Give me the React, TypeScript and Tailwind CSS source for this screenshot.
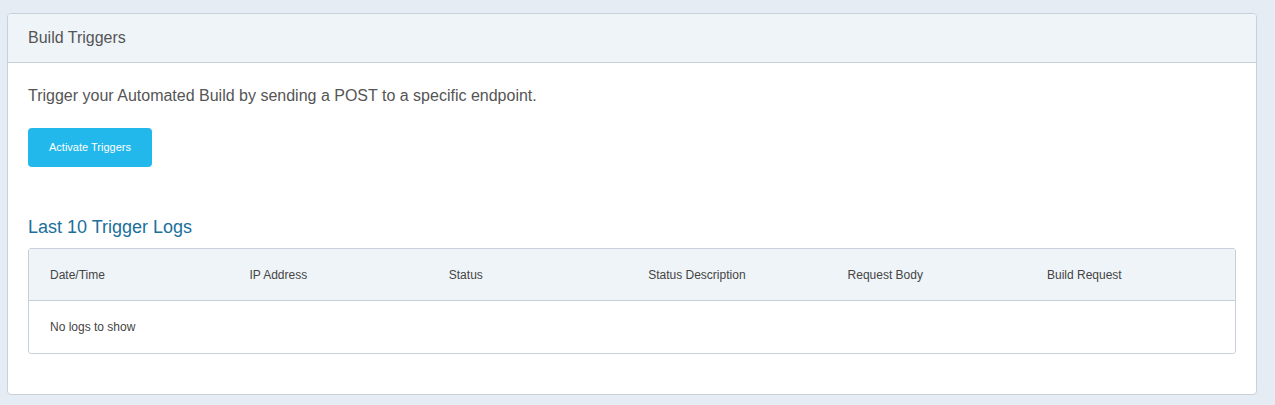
import React from 'react';

const columns = ['Date/Time', 'IP Address', 'Status', 'Status Description', 'Request Body', 'Build Request'];

const App: React.FC = () => {
  return (
    <div className="min-h-[405px] bg-[#e5ecf4] pt-[13px] pl-[7px] pr-[18px] pb-[10px] font-['Liberation_Sans',Arial,sans-serif]">
      <div className="bg-white border border-[#c8d0dc] rounded-[4px] overflow-hidden">
        <div className="h-[49px] bg-[#eff4f9] border-b border-[#c8d0dc] flex items-center px-[20px]">
          <h2 className="text-[16px] text-[#555]">Build Triggers</h2>
        </div>

        <div className="px-[20px] pt-[22px] pb-[40px]">
          <p className="text-[16px] text-[#555] leading-[22px]">
            Trigger your Automated Build by sending a POST to a specific endpoint.
          </p>

          <button className="mt-[21px] w-[124px] h-[39px] bg-[#22b8eb] rounded-[4px] text-white text-[11px]">
            Activate Triggers
          </button>

          <h3 className="mt-[49px] text-[18px] leading-[22px] text-[#1b6f9b]">Last 10 Trigger Logs</h3>

          <div className="mt-[10px] border border-[#c8d0dc] rounded-[3px] text-[12px] text-[#444] overflow-hidden">
            <div className="h-[52px] bg-[#eff4f9] border-b border-[#c8d0dc] grid grid-cols-[repeat(6,199.4px)] items-center pl-[21px]">
              {columns.map(c => (
                <div key={c} className="whitespace-nowrap">{c}</div>
              ))}
            </div>
            <div className="h-[52px] flex items-center pl-[21px]">No logs to show</div>
          </div>
        </div>
      </div>
    </div>
  );
};

export default App;
